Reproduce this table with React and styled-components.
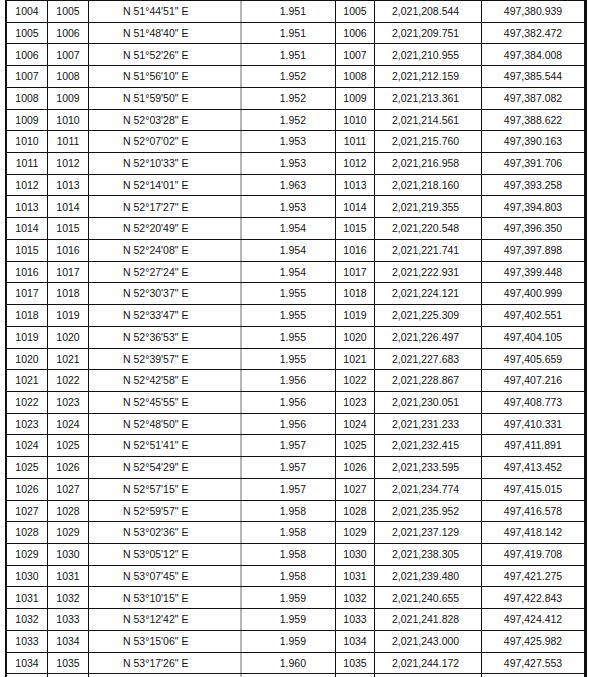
import React from "react";
import styled, { createGlobalStyle } from "styled-components";

const Global = createGlobalStyle`
  html, body { margin: 0; padding: 0; background: #fff; }
  body { font-family: "Liberation Sans", Arial, sans-serif; }
`;

const Page = styled.div`
  width: 589px;
  height: 677px;
  overflow: hidden;
  background: #fff;
`;

const Table = styled.div`
  margin-left: 5px;
  width: 582px;
  box-sizing: border-box;
  border-left: 2px solid #111;
  border-right: 3px solid #111;
  border-top: 1px solid #111;
`;

const Row = styled.div`
  display: grid;
  grid-template-columns: 41px 41px 153px 94px 39px 107px 102px;
  height: 21.72px;
  box-sizing: border-box;
  border-bottom: 1px solid #111;
`;

const Cell = styled.div`
  box-sizing: border-box;
  display: flex;
  align-items: center;
  justify-content: ${(p) =>
    p.$align === "left" ? "flex-start" : p.$align === "right" ? "flex-end" : "center"};
  padding-left: ${(p) => p.$pl || 0}px;
  padding-right: ${(p) => p.$pr || 0}px;
  border-right: ${(p) =>
    p.$last ? "none" : p.$gray ? "2px solid #b8b8b8" : "1px solid #111"};
  font-size: 10.5px;
  color: #141414;
  white-space: nowrap;
  line-height: 1;
`;

const rows = [
  ["1004", "1005", "N 51°44'51\" E", "1.951", "1005", "2,021,208.544", "497,380.939"],
  ["1005", "1006", "N 51°48'40\" E", "1.951", "1006", "2,021,209.751", "497,382.472"],
  ["1006", "1007", "N 51°52'26\" E", "1.951", "1007", "2,021,210.955", "497,384.008"],
  ["1007", "1008", "N 51°56'10\" E", "1.952", "1008", "2,021,212.159", "497,385.544"],
  ["1008", "1009", "N 51°59'50\" E", "1.952", "1009", "2,021,213.361", "497,387.082"],
  ["1009", "1010", "N 52°03'28\" E", "1.952", "1010", "2,021,214.561", "497,388.622"],
  ["1010", "1011", "N 52°07'02\" E", "1.953", "1011", "2,021,215.760", "497,390.163"],
  ["1011", "1012", "N 52°10'33\" E", "1.953", "1012", "2,021,216.958", "497,391.706"],
  ["1012", "1013", "N 52°14'01\" E", "1.963", "1013", "2,021,218.160", "497,393.258"],
  ["1013", "1014", "N 52°17'27\" E", "1.953", "1014", "2,021,219.355", "497,394.803"],
  ["1014", "1015", "N 52°20'49\" E", "1.954", "1015", "2,021,220.548", "497,396.350"],
  ["1015", "1016", "N 52°24'08\" E", "1.954", "1016", "2,021,221.741", "497,397.898"],
  ["1016", "1017", "N 52°27'24\" E", "1.954", "1017", "2,021,222.931", "497,399.448"],
  ["1017", "1018", "N 52°30'37\" E", "1.955", "1018", "2,021,224.121", "497,400.999"],
  ["1018", "1019", "N 52°33'47\" E", "1.955", "1019", "2,021,225.309", "497,402.551"],
  ["1019", "1020", "N 52°36'53\" E", "1.955", "1020", "2,021,226.497", "497,404.105"],
  ["1020", "1021", "N 52°39'57\" E", "1.955", "1021", "2,021,227.683", "497,405.659"],
  ["1021", "1022", "N 52°42'58\" E", "1.956", "1022", "2,021,228.867", "497,407.216"],
  ["1022", "1023", "N 52°45'55\" E", "1.956", "1023", "2,021,230.051", "497,408.773"],
  ["1023", "1024", "N 52°48'50\" E", "1.956", "1024", "2,021,231.233", "497,410.331"],
  ["1024", "1025", "N 52°51'41\" E", "1.957", "1025", "2,021,232.415", "497,411.891"],
  ["1025", "1026", "N 52°54'29\" E", "1.957", "1026", "2,021,233.595", "497,413.452"],
  ["1026", "1027", "N 52°57'15\" E", "1.957", "1027", "2,021,234.774", "497,415.015"],
  ["1027", "1028", "N 52°59'57\" E", "1.958", "1028", "2,021,235.952", "497,416.578"],
  ["1028", "1029", "N 53°02'36\" E", "1.958", "1029", "2,021,237.129", "497,418.142"],
  ["1029", "1030", "N 53°05'12\" E", "1.958", "1030", "2,021,238.305", "497,419.708"],
  ["1030", "1031", "N 53°07'45\" E", "1.958", "1031", "2,021,239.480", "497,421.275"],
  ["1031", "1032", "N 53°10'15\" E", "1.959", "1032", "2,021,240.655", "497,422.843"],
  ["1032", "1033", "N 53°12'42\" E", "1.959", "1033", "2,021,241.828", "497,424.412"],
  ["1033", "1034", "N 53°15'06\" E", "1.959", "1034", "2,021,243.000", "497,425.982"],
  ["1034", "1035", "N 53°17'26\" E", "1.960", "1035", "2,021,244.172", "497,427.553"],
  ["", "", "", "", "", "", ""],
];

export default function App() {
  return (
    <Page>
      <Global />
      <Table>
        {rows.map((r, i) => (
          <Row key={i}>
            <Cell>{r[0]}</Cell>
            <Cell>{r[1]}</Cell>
            <Cell $align="left" $pl={34} $gray>
              {r[2]}
            </Cell>
            <Cell $align="right" $pr={29}>
              {r[3]}
            </Cell>
            <Cell>{r[4]}</Cell>
            <Cell $align="left" $pl={17}>
              {r[5]}
            </Cell>
            <Cell $last>{r[6]}</Cell>
          </Row>
        ))}
      </Table>
    </Page>
  );
}
